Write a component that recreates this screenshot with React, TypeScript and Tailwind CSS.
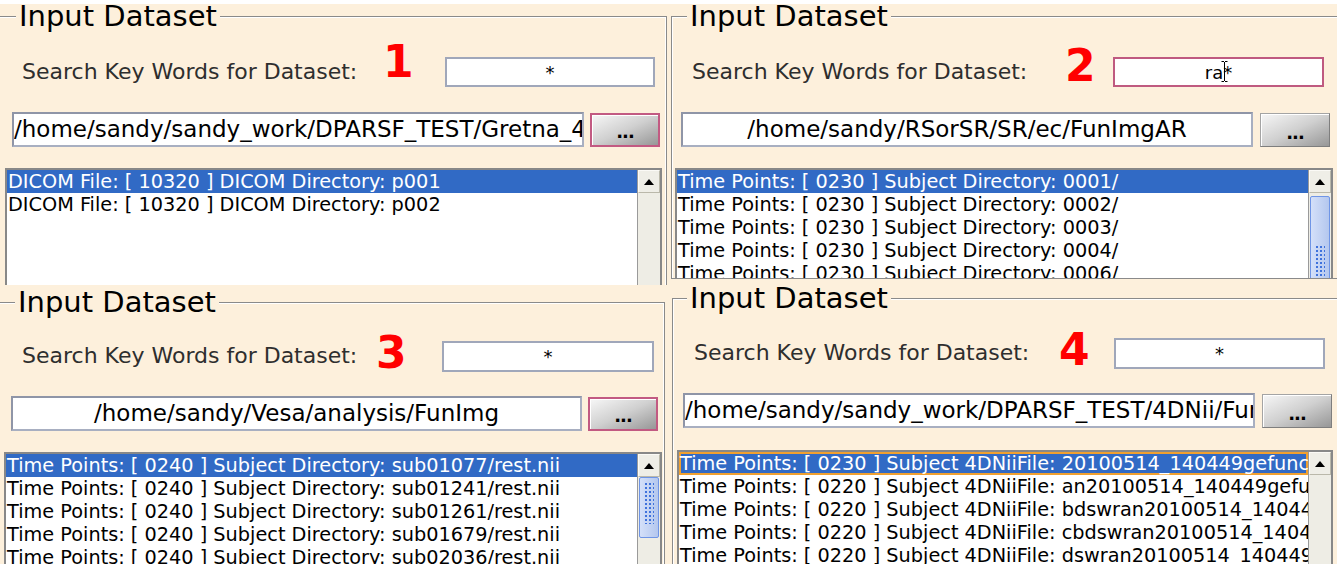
import React from 'react';

interface PanelData {
  num: string;
  search: string;
  caret?: boolean;
  path: string;
  rows: string[];
  cell: string;
  fieldset: string;
  legend: string;
  row1: string;
  label: string;
  numCls: string;
  searchCls: string;
  pathCls: string;
  btnCls: string;
  listCls: string;
  thumb?: string;
  grip?: string;
  focusRow?: boolean;
}

const btnFocus = 'border-2 border-[#c25a82]';
const btnPlain = 'border border-[#a4a4a4] border-r-[#7e7e7e] border-b-[#7e7e7e]';

const panels: PanelData[] = [
  {
    num: '1',
    search: '*',
    path: '/home/sandy/sandy_work/DPARSF_TEST/Gretna_4DNii/FunImg',
    rows: [
      'DICOM File: [ 10320 ] DICOM Directory: p001',
      'DICOM File: [ 10320 ] DICOM Directory: p002',
    ],
    cell: 'bg-[linear-gradient(#fff_4px,#fdf0dc_4px)]',
    fieldset: '-ml-[2px] w-[669px]',
    legend: 'ml-[17px] bg-[linear-gradient(#fff_4px,#fdf0dc_4px)]',
    row1: 'mt-[24px]',
    label: 'ml-[23px] w-[361px]',
    numCls: 'w-[62px] -mt-[17px] mb-[3px]',
    searchCls: 'w-[210px] h-[30px] border-[#a0a7ba]',
    pathCls: 'ml-[13px] w-[572px]',
    btnCls: `ml-[6px] ${btnFocus}`,
    listCls: 'mt-[21px] ml-[6px] w-[657px] h-[200px]',
  },
  {
    num: '2',
    search: 'ra*',
    caret: true,
    path: '/home/sandy/RSorSR/SR/ec/FunImgAR',
    rows: [
      'Time Points: [ 0230 ] Subject Directory: 0001/',
      'Time Points: [ 0230 ] Subject Directory: 0002/',
      'Time Points: [ 0230 ] Subject Directory: 0003/',
      'Time Points: [ 0230 ] Subject Directory: 0004/',
      'Time Points: [ 0230 ] Subject Directory: 0006/',
    ],
    cell: 'bg-[linear-gradient(#fff_4px,#fdf0dc_4px)]',
    fieldset: 'ml-[3px] w-[700px]',
    legend: 'ml-[15px] bg-[linear-gradient(#fff_4px,#fdf0dc_4px)]',
    row1: 'mt-[24px]',
    label: 'ml-[20px] w-[373px]',
    numCls: 'w-[48px] -mt-[13px] -mb-[1px]',
    searchCls: 'w-[211px] h-[30px] border-[#bf5a80]',
    pathCls: 'ml-[9px] w-[572px]',
    btnCls: `ml-[7px] ${btnPlain}`,
    listCls: 'mt-[21px] ml-[3px] w-[658px] h-[110px] border-b-0',
    thumb: 'mt-[3px] h-[138px]',
    grip: 'mt-[48px] h-[40px]',
  },
  {
    num: '3',
    search: '*',
    path: '/home/sandy/Vesa/analysis/FunImg',
    rows: [
      'Time Points: [ 0240 ] Subject Directory: sub01077/rest.nii',
      'Time Points: [ 0240 ] Subject Directory: sub01241/rest.nii',
      'Time Points: [ 0240 ] Subject Directory: sub01261/rest.nii',
      'Time Points: [ 0240 ] Subject Directory: sub01679/rest.nii',
      'Time Points: [ 0240 ] Subject Directory: sub02036/rest.nii',
    ],
    cell: 'bg-[#fdf0dc]',
    fieldset: '-ml-[2px] mt-[1px] w-[667px]',
    legend: 'ml-[16px] bg-[#fdf0dc]',
    row1: 'mt-[22px]',
    label: 'ml-[23px] w-[354px]',
    numCls: 'w-[66px] -mt-[10px] -mb-[4px]',
    searchCls: 'w-[212px] h-[31px] border-[#a0a7ba]',
    pathCls: 'ml-[12px] w-[571px]',
    btnCls: `ml-[6px] ${btnFocus}`,
    listCls: 'mt-[21px] ml-[5px] w-[658px] h-[200px]',
    thumb: 'mt-0 h-[61px]',
    grip: 'mt-[4px] h-[42px]',
  },
  {
    num: '4',
    search: '*',
    path: '/home/sandy/sandy_work/DPARSF_TEST/4DNii/FunImg',
    rows: [
      'Time Points: [ 0230 ] Subject 4DNiiFile: 20100514_140449gefunc.nii',
      'Time Points: [ 0220 ] Subject 4DNiiFile: an20100514_140449gefunc.nii',
      'Time Points: [ 0220 ] Subject 4DNiiFile: bdswran20100514_140449gefunc.nii',
      'Time Points: [ 0220 ] Subject 4DNiiFile: cbdswran20100514_140449gefunc.nii',
      'Time Points: [ 0220 ] Subject 4DNiiFile: dswran20100514_140449gefunc.nii',
    ],
    cell: 'bg-[#fdf0dc]',
    fieldset: 'ml-[4px] -mt-[3px] w-[700px]',
    legend: 'ml-[14px] bg-[#fdf0dc]',
    row1: 'mt-[23px]',
    label: 'ml-[21px] w-[365px]',
    numCls: 'w-[55px] -mt-[10px] -mb-[4px]',
    searchCls: 'w-[211px] h-[31px] border-[#a0a7ba]',
    pathCls: 'ml-[10px] w-[572px]',
    btnCls: `ml-[7px] ${btnPlain}`,
    listCls: 'mt-[22px] ml-[4px] w-[656px] h-[200px]',
    focusRow: true,
  },
];

function ScrollBar({ p }: { p: PanelData }) {
  return (
    <div className="w-[23px] shrink-0 flex flex-col border-l border-[#9a9a9a] bg-[#eeede5]">
      <div className="h-[23px] shrink-0 flex items-center justify-center bg-[#efeee7] border border-[#fbfaf6] border-r-[#bab8aa] border-b-[#bab8aa]">
        <svg width="10" height="6" viewBox="0 0 10 6">
          <polygon points="5,0 10,6 0,6" fill="#000" />
        </svg>
      </div>
      {p.thumb && (
        <div
          className={`shrink-0 mx-[1px] rounded-[2px] border border-[#6f95e6] bg-linear-to-r from-[#d4e0f9] to-[#b4c7ee] ${p.thumb}`}
        >
          <div
            className={`mx-[4px] bg-[radial-gradient(circle,#3f72dc_0.9px,transparent_1.2px)] bg-[length:4px_4px] ${p.grip}`}
          />
        </div>
      )}
    </div>
  );
}

function Panel({ p }: { p: PanelData }) {
  return (
    <div className={`overflow-hidden ${p.cell}`}>
      <fieldset
        className={`border border-[#8a8a8a] shadow-[inset_1px_1px_0_#fff,inset_-1px_0_0_#fff] ${p.fieldset}`}
      >
        <legend className={`px-[3px] text-[29px] leading-[33px] text-black ${p.legend}`}>
          Input Dataset
        </legend>

        <div className={`flex items-center h-[30px] ${p.row1}`}>
          <span className={`shrink-0 whitespace-nowrap text-[22px] leading-[26px] text-[#2e2e2e] ${p.label}`}>
            Search Key Words for Dataset:
          </span>
          <span className={`shrink-0 font-bold text-[44px] leading-[44px] text-[#ff0000] ${p.numCls}`}>
            {p.num}
          </span>
          <div
            className={`relative shrink-0 flex items-center justify-center bg-white border-2 text-[18px] text-black ${p.searchCls}`}
          >
            {p.search}
            {p.caret && (
              <svg className="absolute left-[106px] top-[2px]" width="7" height="21" viewBox="0 0 7 21">
                <path
                  d="M0.5 0.5h2.5M4 0.5h2.5M3.5 1v19M0.5 20.5h2.5M4 20.5h2.5"
                  stroke="#000"
                  strokeWidth="1"
                  fill="none"
                />
              </svg>
            )}
          </div>
        </div>

        <div className="flex items-center mt-[25px]">
          <div
            className={`shrink-0 h-[35px] overflow-hidden whitespace-nowrap text-center bg-white border-2 border-[#a8afc1] border-t-[#8f95a7] border-l-[#8f95a7] text-[23px] leading-[31px] text-black ${p.pathCls}`}
          >
            {p.path}
          </div>
          <div
            className={`shrink-0 w-[70px] h-[34px] flex items-end justify-center pb-[4px] bg-linear-to-br from-[#f7f7f7] via-[#d0d0d0] to-[#979797] shadow-[inset_1px_1px_0_#fff] ${p.btnCls}`}
          >
            <span className="font-bold text-[18px] leading-none tracking-[-1px] text-black">...</span>
          </div>
        </div>

        <div className={`flex overflow-hidden bg-white border-2 border-[#888] ${p.listCls}`}>
          <div className="flex-1 min-w-0">
            {p.rows.map((r, i) => (
              <div
                key={r}
                className={`h-[23px] pl-[1px] overflow-hidden whitespace-nowrap text-[19.3px] leading-[23px] ${
                  i === 0 ? 'bg-[#316ac5] text-white' : 'text-black'
                } ${i === 0 && p.focusRow ? 'shadow-[inset_0_0_0_2px_#f0a030]' : ''}`}
              >
                {r}
              </div>
            ))}
          </div>
          <ScrollBar p={p} />
        </div>
      </fieldset>
    </div>
  );
}

export default function App() {
  return (
    <div className="grid grid-cols-[668px_669px] grid-rows-[285px_279px] w-[1337px] h-[564px] overflow-hidden bg-[#fdf0dc] font-['DejaVu_Sans','Liberation_Sans',sans-serif]">
      {panels.map((p) => (
        <Panel key={p.num} p={p} />
      ))}
    </div>
  );
}
